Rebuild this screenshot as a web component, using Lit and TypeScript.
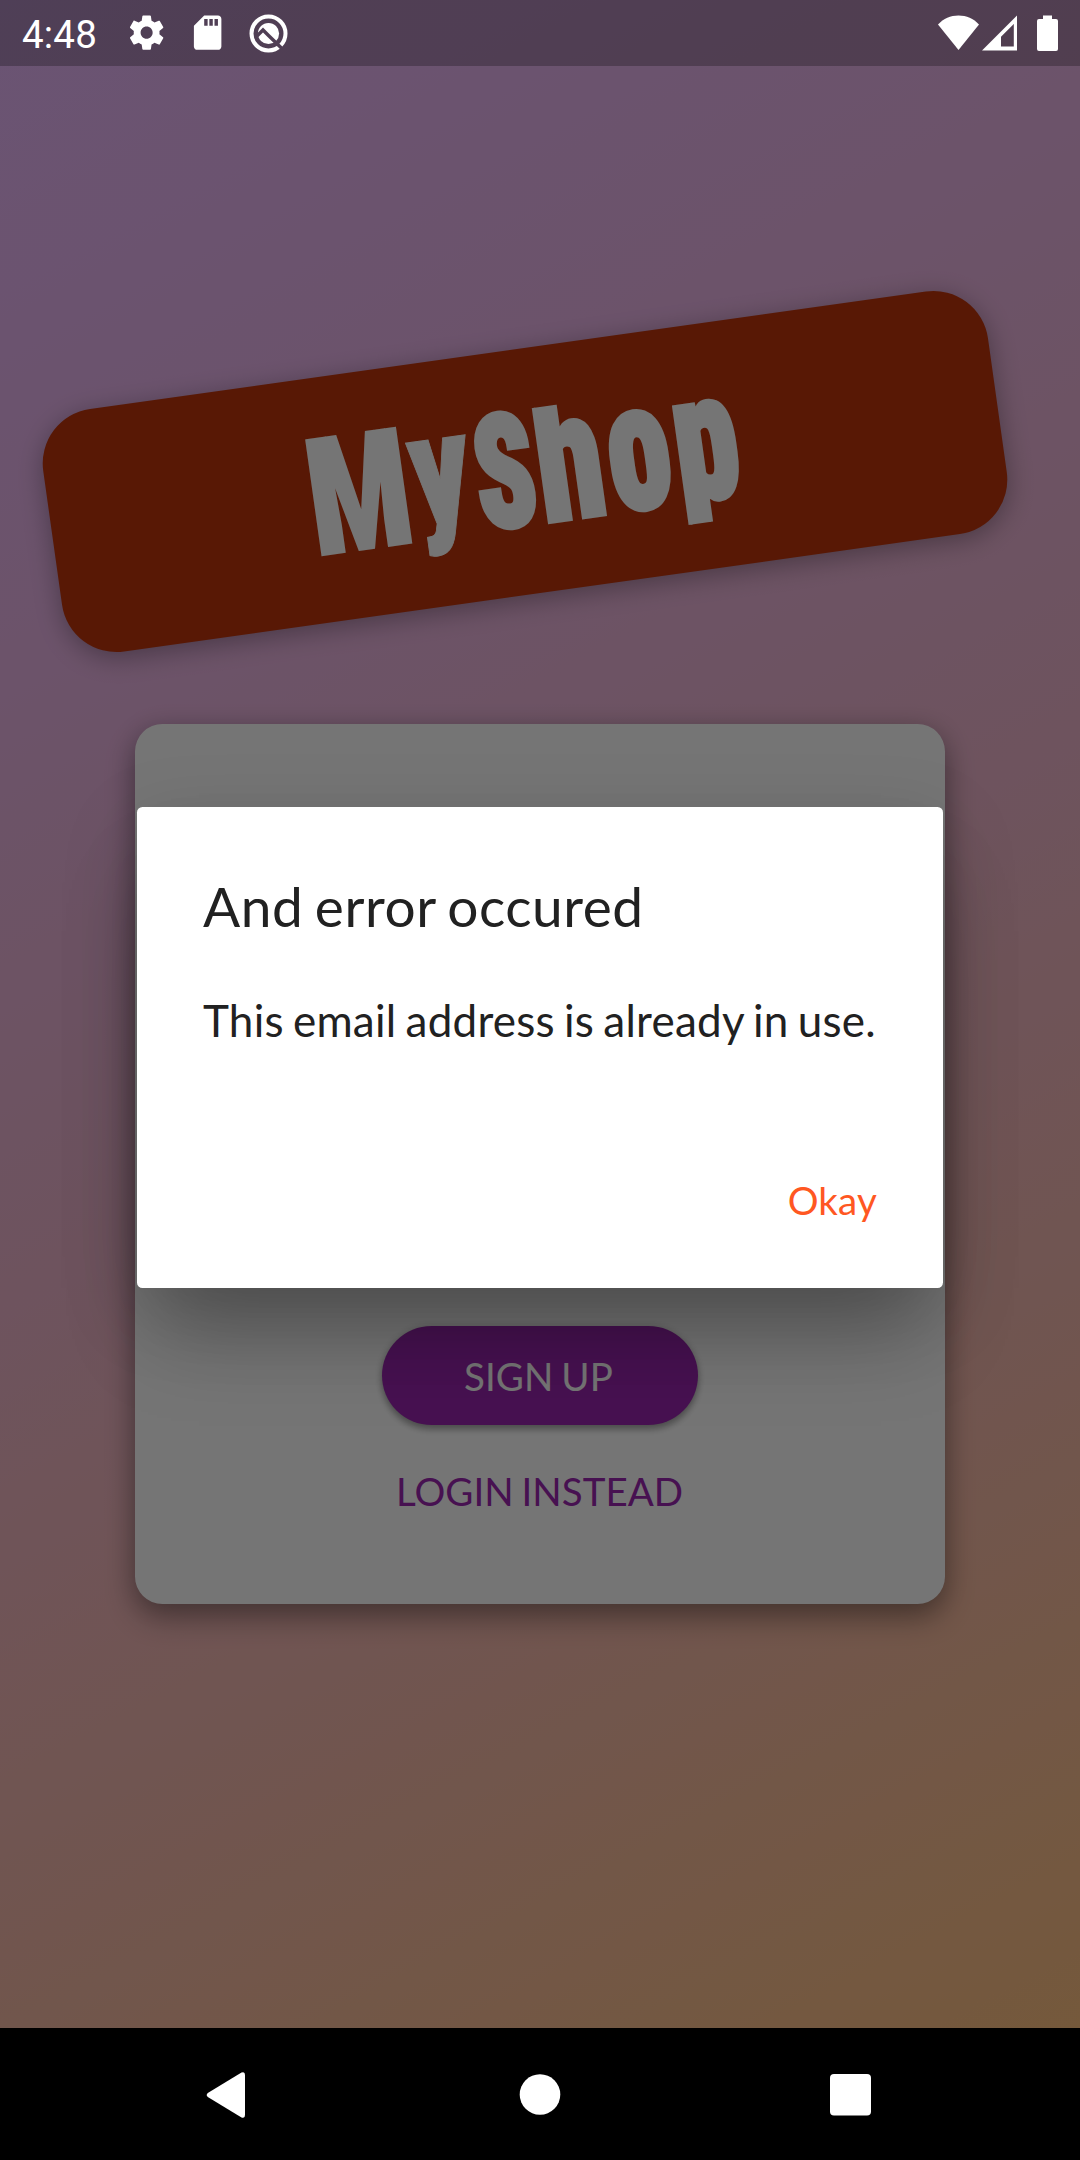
import { LitElement, html, css } from "lit";
import { customElement, property } from "lit/decorators.js";

@customElement("status-bar")
export class StatusBar extends LitElement {
  static styles = css`
    :host {
      display: flex;
      align-items: center;
      justify-content: space-between;
      box-sizing: border-box;
      height: 66px;
      padding: 0 22px;
      background: rgba(0, 0, 0, 0.25);
      color: #fff;
      position: relative;
      z-index: 2;
    }
    .group { display: flex; align-items: center; }
    .time {
      width: 104px;
      font: 400 38.5px/66px Roboto, sans-serif;
      letter-spacing: 0.2px;
      padding-top: 2px;
      height: 64px;
    }
    .notices { gap: 19.6px; }
    svg { display: block; fill: #fff; }
    .ring { fill: none; stroke: #fff; stroke-width: 4; }
    .wifi { margin-right: 3px; }
    .signal { margin-right: 20px; }
  `;

  render() {
    return html`
      <div class="group">
        <span class="time">4:48</span>
        <div class="group notices">
          <svg width="41.25" height="41.25" viewBox="0 0 24 24">
            <path d="M19.43 12.98c.04-.32.07-.64.07-.98s-.03-.66-.07-.98l2.11-1.65c.19-.15.24-.42.12-.64l-2-3.46c-.12-.22-.39-.3-.61-.22l-2.49 1c-.52-.4-1.08-.73-1.69-.98l-.38-2.65C14.46 2.18 14.25 2 14 2h-4c-.25 0-.46.18-.49.42l-.38 2.65c-.61.25-1.17.59-1.69.98l-2.49-1c-.23-.09-.49 0-.61.22l-2 3.46c-.13.22-.07.49.12.64l2.11 1.65c-.04.32-.07.65-.07.98s.03.66.07.98l-2.11 1.65c-.19.15-.24.42-.12.64l2 3.46c.12.22.39.3.61.22l2.49-1c.52.4 1.08.73 1.69.98l.38 2.65c.03.24.24.42.49.42h4c.25 0 .46-.18.49-.42l.38-2.65c.61-.25 1.17-.59 1.69-.98l2.49 1c.23.09.49 0 .61-.22l2-3.46c.12-.22.07-.49-.12-.64l-2.11-1.65zM12 15.500c-1.930 0-3.500-1.570-3.500-3.500s1.570-3.500 3.500-3.500 3.500 1.570 3.500 3.500-1.570 3.500-3.500 3.500z"/>
          </svg>
          <svg width="41.25" height="41.25" viewBox="0 0 24 24">
            <path d="M18 2h-8L4.02 8 4 20c0 1.1.9 2 2 2h12c1.1 0 2-.9 2-2V4c0-1.1-.9-2-2-2zm-6 6h-2V4h2v4zm3 0h-2V4h2v4zm3 0h-2V4h2v4z"/>
          </svg>
          <svg width="41" height="41" viewBox="0 0 41 41">
            <mask id="cut">
              <rect width="41" height="41" fill="#fff"/>
              <path d="M8.500 23.500L15 17L20.500 22.500L36 37.500" fill="none" stroke="#000" stroke-width="3.4"/>
            </mask>
            <g mask="url(#cut)">
              <circle class="ring" cx="20.5" cy="20.5" r="17"/>
              <circle cx="20.5" cy="20.5" r="10.6"/>
            </g>
          </svg>
        </div>
      </div>
      <div class="group">
        <svg class="wifi" width="41" height="36" viewBox="0 0 41 36">
          <path d="M0 9.5C5.500 3.600 12.500 0.500 20.500 0.500S35.500 3.600 41 9.500L20.500 35Z"/>
        </svg>
        <svg class="signal" width="35" height="36" viewBox="0 0 35 36">
          <path fill-rule="evenodd" d="M35 0.500V35.500H0ZM31.800 9L19 21.800V31.500H31.800Z"/>
        </svg>
        <svg width="21" height="36" viewBox="0 0 21 36">
          <path d="M6 0.500h9V4h4a2 2 0 0 1 2 2v28a2 2 0 0 1-2 2H2a2 2 0 0 1-2-2V6a2 2 0 0 1 2-2h4Z"/>
        </svg>
      </div>
    `;
  }
}

@customElement("shop-banner")
export class ShopBanner extends LitElement {
  static styles = css`
    :host {
      display: block;
      box-sizing: border-box;
      width: 954.4px;
      height: 245px;
      padding: 44.3px 0 0 257.9px;
      border-radius: 55px;
      background: #bf360c;
      box-shadow: 0 5.5px 26px rgba(0, 0, 0, 0.32);
      transform: rotate(-8deg);
    }
    h1 {
      margin: 0;
      white-space: nowrap;
      color: #fff;
      font: 900 160px/160px "Roboto Condensed", Roboto, sans-serif;
      font-kerning: none;
      display: flex;
    }
    /* Each glyph is condensed about its baseline. */
    span { display: block; transform-origin: 0 134.7px; }
    .m {
      width: 104.6px;
      -webkit-text-stroke: 2px #fff;
      transform: translateY(-1px) scale(0.85, 1.019);
    }
    .y {
      width: 64.5px;
      -webkit-text-stroke: 1px #fff;
      transform: translateY(-17.3px) scale(0.829, 0.979);
    }
    .s {
      width: 62.3px;
      -webkit-text-stroke: 7px #fff;
      transform: translateY(-4px) scale(0.671, 0.973);
    }
    .h {
      width: 71.6px;
      -webkit-text-stroke: 4px #fff;
      transform: translateY(-2.3px) scale(0.844, 1.13);
      clip-path: inset(32.3px -40px -20px -20px);
    }
    .o {
      width: 66.7px;
      -webkit-text-stroke: 5px #fff;
      transform: translateY(-3px) scale(0.789, 1.119);
    }
    .p {
      width: 65px;
      -webkit-text-stroke: 5px #fff;
      transform: translateY(-3px) scale(0.805, 1.119);
      clip-path: inset(-20px -40px 5.2px -20px);
    }
  `;

  render() {
    return html`<h1><span class="m">M</span><span class="y">y</span><span class="s">S</span><span class="h">h</span><span class="o">o</span><span class="p">p</span></h1>`;
  }
}

@customElement("auth-card")
export class AuthCard extends LitElement {
  static styles = css`
    :host {
      display: flex;
      flex-direction: column;
      align-items: center;
      justify-content: flex-end;
      box-sizing: border-box;
      width: 810px;
      height: 880px;
      padding-bottom: 63.5px;
      border-radius: 27.5px;
      background: #fff;
      box-shadow: 0 14px 30px rgba(0, 0, 0, 0.32), 0 3px 26px rgba(0, 0, 0, 0.14);
      font-family: Lato, sans-serif;
    }
    button {
      border: 0;
      padding: 0;
      font: 400 38.5px/46px Lato, sans-serif;
    }
    .primary {
      width: 316px;
      height: 99px;
      padding-right: 3px;
      border-radius: 49.5px;
      background: #9c27b0;
      color: #fff;
      letter-spacing: 0.05px;
      word-spacing: -2px;
      box-shadow: 0 5px 6px rgba(0, 0, 0, 0.24), 0 1px 9px rgba(0, 0, 0, 0.2);
    }
    .link {
      height: 99px;
      margin-top: 16px;
      padding-right: 1px;
      background: none;
      color: #9c27b0;
      letter-spacing: 0.02px;
      word-spacing: -2px;
    }
  `;

  render() {
    return html`
      <button class="primary">SIGN UP</button>
      <button class="link">LOGIN INSTEAD</button>
    `;
  }
}

@customElement("alert-dialog")
export class AlertDialog extends LitElement {
  @property() heading = "";
  @property() message = "";
  @property() action = "";

  static styles = css`
    :host {
      display: flex;
      flex-direction: column;
      box-sizing: border-box;
      width: 806px;
      height: 481px;
      padding: 66px 66px 65px;
      border-radius: 5.5px;
      background: #fff;
      color: #212121;
      font-family: Lato, sans-serif;
      box-shadow: 0 62px 84px -20px rgba(0, 0, 0, 0.26), 0 22px 80px rgba(0, 0, 0, 0.15);
    }
    h2 {
      margin: 0;
      font: 400 55px/66px Lato, sans-serif;
      letter-spacing: 0.54px;
      word-spacing: -3px;
    }
    p {
      margin: 55px 0 0;
      font: 400 44px/53px Lato, sans-serif;
      letter-spacing: 0.24px;
      word-spacing: -2.3px;
      white-space: nowrap;
    }
    button {
      align-self: flex-end;
      margin-top: auto;
      border: 0;
      padding: 0;
      background: none;
      color: #ff5722;
      font: 400 38.5px/46px Lato, sans-serif;
      letter-spacing: 0.2px;
    }
  `;

  render() {
    return html`
      <h2>${this.heading}</h2>
      <p>${this.message}</p>
      <button>${this.action}</button>
    `;
  }
}

@customElement("nav-bar")
export class NavBar extends LitElement {
  static styles = css`
    :host {
      display: flex;
      align-items: center;
      justify-content: space-between;
      box-sizing: border-box;
      height: 132px;
      padding: 1px 209px 0 206px;
      background: #000;
    }
    svg { display: block; fill: #fff; }
    .home { margin-left: 4px; }
  `;

  render() {
    return html`
      <svg width="40" height="46" viewBox="0 0 40 46">
        <path d="M35.500 0.600Q39 -0.900 39 3V43Q39 46.900 35.500 45.400L1.800 25Q-0.400 23 1.800 21Z"/>
      </svg>
      <svg class="home" width="42" height="42" viewBox="0 0 42 42"><circle cx="21" cy="20.500" r="20.300"/></svg>
      <svg width="41" height="42" viewBox="0 0 41 42"><rect width="41" height="41.500" rx="4"/></svg>
    `;
  }
}

@customElement("app-root")
export class AppRoot extends LitElement {
  static styles = css`
    :host {
      display: flex;
      flex-direction: column;
      width: 1080px;
      height: 2160px;
      overflow: hidden;
    }
    .screen {
      position: relative;
      flex: 1;
      display: flex;
      flex-direction: column;
      background: linear-gradient(
        151.96deg,
        rgb(232, 183, 252) 0%,
        rgb(235, 181, 232) 25%,
        rgb(239, 182, 205) 50%,
        rgb(246, 186, 171) 75%,
        rgb(254, 194, 130) 100%
      );
      overflow: hidden;
    }
    .content { display: flex; flex-direction: column; }
    shop-banner { margin: 283.2px 0 0 48px; }
    auth-card { margin: 129.8px auto 0; }
    .scrim {
      position: absolute;
      inset: 0;
      box-sizing: border-box;
      padding-top: 66px;
      display: flex;
      align-items: center;
      justify-content: center;
      background: rgba(0, 0, 0, 0.54);
    }
  `;

  render() {
    return html`
      <div class="screen">
        <status-bar></status-bar>
        <main class="content">
          <shop-banner></shop-banner>
          <auth-card></auth-card>
        </main>
        <div class="scrim">
          <alert-dialog
            heading="And error occured"
            message="This email address is already in use."
            action="Okay"
          ></alert-dialog>
        </div>
      </div>
      <nav-bar></nav-bar>
    `;
  }
}
